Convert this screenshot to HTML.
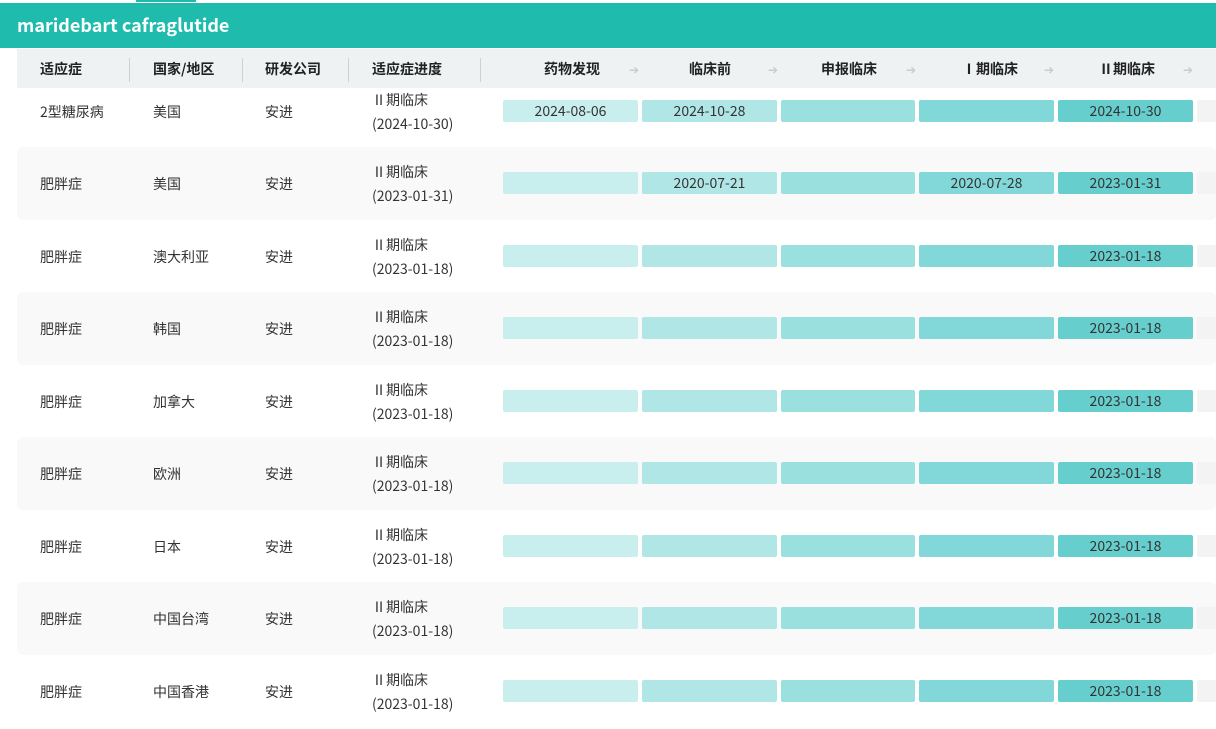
<!DOCTYPE html>
<html><head><meta charset="utf-8"><style>
*{margin:0;padding:0;box-sizing:border-box}
body{width:1216px;height:712px;overflow:hidden;background:#fff;font-family:"Noto Sans CJK SC","Liberation Sans",sans-serif;font-size:14px;color:#333;position:relative}
.a{position:absolute}
.top{left:0;top:3px;width:1216px;height:45px;background:#1fbcae;color:#fff;font-weight:bold;font-size:18px;line-height:44px;padding-left:17px}
.mark{left:136px;top:0;width:60px;height:2px;background:#1fbcae}
.hd{left:17px;top:49px;width:1199px;height:39px;background:#eef2f3;z-index:2;font-weight:bold;color:#222}
.hd span{position:absolute;top:1px;line-height:39px}
.sep{position:absolute;top:9px;width:1px;height:24px;background:#ccd2d4}
.arr{color:#c8cccc;font-weight:normal;font-size:12px}
.row{position:absolute;left:17px;width:1199px;height:73px}
.g{background:#f9f9f9;border-radius:6px}
.row .t{position:absolute;top:1px;line-height:73px}
.row .p{position:absolute;left:355px;top:13px;line-height:24px}
.b{position:absolute;top:25px;height:22px;line-height:22px;text-align:center;border-radius:2px;color:#333}
.b1{left:486px;width:135px;background:#c8eeee}
.b2{left:625px;width:135px;background:#b0e6e6}
.b3{left:764px;width:134px;background:#9ae0df}
.b4{left:902px;width:135px;background:#82d8d8}
.b5{left:1041px;width:135px;background:#66cfce}
.b6{left:1180px;width:30px;background:#f3f3f3}
</style></head><body>
<div class="a mark"></div>
<div class="a top">maridebart cafraglutide</div>
<div class="a hd">
<span style="left:23px">适应症</span><div class="sep" style="left:112px"></div>
<span style="left:136px">国家/地区</span><div class="sep" style="left:225px"></div>
<span style="left:248px">研发公司</span><div class="sep" style="left:331px"></div>
<span style="left:355px">适应症进度</span><div class="sep" style="left:463px"></div>
<span style="left:527px">药物发现</span><span class="arr" style="left:612px">➔</span>
<span style="left:672px">临床前</span><span class="arr" style="left:751px">➔</span>
<span style="left:804px">申报临床</span><span class="arr" style="left:889px">➔</span>
<span style="left:945px">Ⅰ期临床</span><span class="arr" style="left:1027px">➔</span>
<span style="left:1082px">Ⅱ期临床</span><span class="arr" style="left:1166px">➔</span>
</div>

<div class="row" style="top:75px"><span class="t" style="left:23px">2型糖尿病</span><span class="t" style="left:136px">美国</span><span class="t" style="left:248px">安进</span><div class="p">Ⅱ期临床<br>(2024-10-30)</div><div class="b b1">2024-08-06</div><div class="b b2">2024-10-28</div><div class="b b3"></div><div class="b b4"></div><div class="b b5">2024-10-30</div><div class="b b6"></div></div>

<div class="row g" style="top:147px"><span class="t" style="left:23px">肥胖症</span><span class="t" style="left:136px">美国</span><span class="t" style="left:248px">安进</span><div class="p">Ⅱ期临床<br>(2023-01-31)</div><div class="b b1"></div><div class="b b2">2020-07-21</div><div class="b b3"></div><div class="b b4">2020-07-28</div><div class="b b5">2023-01-31</div><div class="b b6"></div></div>

<div class="row" style="top:220px"><span class="t" style="left:23px">肥胖症</span><span class="t" style="left:136px">澳大利亚</span><span class="t" style="left:248px">安进</span><div class="p">Ⅱ期临床<br>(2023-01-18)</div><div class="b b1"></div><div class="b b2"></div><div class="b b3"></div><div class="b b4"></div><div class="b b5">2023-01-18</div><div class="b b6"></div></div>

<div class="row g" style="top:292px"><span class="t" style="left:23px">肥胖症</span><span class="t" style="left:136px">韩国</span><span class="t" style="left:248px">安进</span><div class="p">Ⅱ期临床<br>(2023-01-18)</div><div class="b b1"></div><div class="b b2"></div><div class="b b3"></div><div class="b b4"></div><div class="b b5">2023-01-18</div><div class="b b6"></div></div>

<div class="row" style="top:365px"><span class="t" style="left:23px">肥胖症</span><span class="t" style="left:136px">加拿大</span><span class="t" style="left:248px">安进</span><div class="p">Ⅱ期临床<br>(2023-01-18)</div><div class="b b1"></div><div class="b b2"></div><div class="b b3"></div><div class="b b4"></div><div class="b b5">2023-01-18</div><div class="b b6"></div></div>

<div class="row g" style="top:437px"><span class="t" style="left:23px">肥胖症</span><span class="t" style="left:136px">欧洲</span><span class="t" style="left:248px">安进</span><div class="p">Ⅱ期临床<br>(2023-01-18)</div><div class="b b1"></div><div class="b b2"></div><div class="b b3"></div><div class="b b4"></div><div class="b b5">2023-01-18</div><div class="b b6"></div></div>

<div class="row" style="top:510px"><span class="t" style="left:23px">肥胖症</span><span class="t" style="left:136px">日本</span><span class="t" style="left:248px">安进</span><div class="p">Ⅱ期临床<br>(2023-01-18)</div><div class="b b1"></div><div class="b b2"></div><div class="b b3"></div><div class="b b4"></div><div class="b b5">2023-01-18</div><div class="b b6"></div></div>

<div class="row g" style="top:582px"><span class="t" style="left:23px">肥胖症</span><span class="t" style="left:136px">中国台湾</span><span class="t" style="left:248px">安进</span><div class="p">Ⅱ期临床<br>(2023-01-18)</div><div class="b b1"></div><div class="b b2"></div><div class="b b3"></div><div class="b b4"></div><div class="b b5">2023-01-18</div><div class="b b6"></div></div>

<div class="row" style="top:655px"><span class="t" style="left:23px">肥胖症</span><span class="t" style="left:136px">中国香港</span><span class="t" style="left:248px">安进</span><div class="p">Ⅱ期临床<br>(2023-01-18)</div><div class="b b1"></div><div class="b b2"></div><div class="b b3"></div><div class="b b4"></div><div class="b b5">2023-01-18</div><div class="b b6"></div></div>
</body></html>
